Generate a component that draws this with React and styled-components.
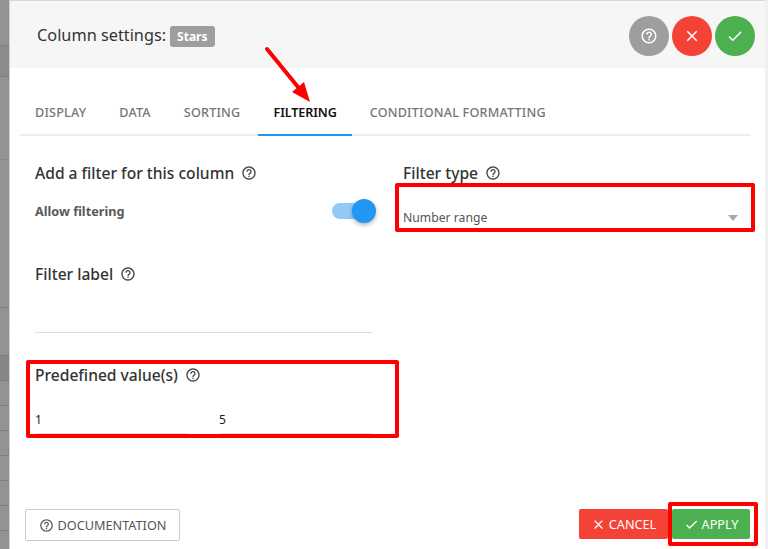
import React from 'react';
import styled, { createGlobalStyle } from 'styled-components';
import { MdHelpOutline, MdClose, MdCheck } from 'react-icons/md';

const GlobalStyle = createGlobalStyle`
  html, body {
    margin: 0;
    padding: 0;
    height: 100%;
    overflow: hidden;
    background: #f0f0f0;
    font-family: "Noto Sans", "Open Sans", sans-serif;
  }
  * {
    box-sizing: border-box;
  }
`;

const Page = styled.div`
  position: relative;
  display: flex;
  width: 768px;
  height: 549px;
  overflow: hidden;
`;

const Backdrop = styled.div`
  width: 10px;
  flex: none;
  display: flex;
  flex-direction: column;
  background: #939393;
  border-right: 1px solid #cfcfcf;
`;

const BackdropRow = styled.div`
  position: relative;
  height: ${(p) => p.$h}px;
  flex: none;
  background: ${(p) => p.$bg || 'transparent'};
  border-bottom: 1px solid ${(p) => p.$line || '#7f7f7f'};

  &::after {
    content: '';
    display: ${(p) => (p.$mark ? 'block' : 'none')};
    position: absolute;
    right: 0;
    top: ${(p) => p.$mark}px;
    width: 1px;
    height: 4px;
    background: #a58a4e;
  }
`;

const Modal = styled.div`
  width: 755px;
  flex: none;
  display: flex;
  flex-direction: column;
  margin-top: 1px;
  background: #fff;
  box-shadow: 0 -1px 0 #d8d8d8;
`;

const Header = styled.div`
  height: 67px;
  flex: none;
  display: flex;
  align-items: center;
  justify-content: space-between;
  padding: 3px 10px 0 27px;
  background: #f6f6f6;
`;

const TitleGroup = styled.div`
  display: flex;
  align-items: center;
  gap: 4px;
`;

const Title = styled.div`
  font-size: 16.3px;
  color: #333;
  line-height: 22px;
  margin-top: -2px;
`;

const Chip = styled.span`
  display: inline-flex;
  align-items: center;
  height: 21px;
  padding: 0 7px;
  margin-top: 1px;
  border-radius: 3px;
  background: #9e9e9e;
  color: #fff;
  font-size: 12px;
  font-weight: 700;
`;

const HeaderActions = styled.div`
  display: flex;
  gap: 3px;
`;

const RoundButton = styled.button`
  width: 40px;
  height: 40px;
  padding: 0;
  border: none;
  border-radius: 50%;
  display: flex;
  align-items: center;
  justify-content: center;
  color: #fff;
  background: ${(p) => p.$bg};
`;

const Tabs = styled.div`
  display: flex;
  gap: 3px;
  height: 46px;
  flex: none;
  margin: 22px 14px 0 10px;
  border-bottom: 2px solid #eee;
`;

const Tab = styled.div`
  height: 46px;
  padding: 0 15px;
  display: flex;
  align-items: center;
  font-size: 12.6px;
  letter-spacing: ${(p) => (p.$active ? '-0.1px' : '0.2px')};
  font-weight: ${(p) => (p.$active ? 600 : 500)};
  white-space: nowrap;
  color: ${(p) => (p.$active ? '#111' : '#757575')};
  border-bottom: 2px solid ${(p) => (p.$active ? '#2196f3' : 'transparent')};
`;

const Content = styled.div`
  flex: 1;
  display: grid;
  grid-template-columns: 337px 337px;
  column-gap: 31px;
  padding: 25px 0 0 25px;
`;

const Column = styled.div`
  display: flex;
  flex-direction: column;
`;

const SectionTitle = styled.div`
  display: flex;
  align-items: center;
  gap: 7px;
  height: 24px;
  font-size: 15.6px;
  font-weight: 500;
  color: #333;
`;

const ToggleRow = styled.div`
  display: flex;
  align-items: center;
  justify-content: space-between;
  height: 24px;
  margin-top: 14px;
`;

const ToggleLabel = styled.div`
  font-size: 12.7px;
  font-weight: 700;
  color: #5a5a5a;
`;

const Toggle = styled.div`
  position: relative;
  width: 40px;
  height: 16px;
  border-radius: 8px;
  background: #90caf9;
`;

const Thumb = styled.div`
  position: absolute;
  right: -4px;
  top: -4px;
  width: 24px;
  height: 24px;
  border-radius: 50%;
  background: #2196f3;
  box-shadow: 0 2px 4px rgba(0, 0, 0, 0.3);
`;

const LabelField = styled.div`
  margin-top: 39px;
`;

const Underline = styled.div`
  height: 24px;
  margin-top: 23px;
  border-bottom: 1px solid #ddd;
`;

const SelectBox = styled.div`
  display: flex;
  align-items: flex-end;
  justify-content: space-between;
  height: 40px;
  margin-top: 7px;
  padding: 0 2px 5px 0;
  font-size: 12.2px;
  color: #555;
  border-bottom: 1px solid #ddd;
`;

const Caret = styled.span`
  width: 0;
  height: 0;
  margin-bottom: 5px;
  border-left: 5px solid transparent;
  border-right: 5px solid transparent;
  border-top: 6px solid #aaa;
`;

const Predefined = styled.div`
  margin-top: 30px;
`;

const RangeRow = styled.div`
  display: grid;
  grid-template-columns: 154px 153px;
  column-gap: 30px;
  margin-top: 22px;
`;

const RangeInput = styled.div`
  height: 25px;
  font-size: 12px;
  line-height: 22px;
  color: #222;
  border-bottom: 1px solid #e4e4e4;
`;

const Footer = styled.div`
  display: flex;
  justify-content: space-between;
  align-items: flex-start;
  height: 40px;
  flex: none;
  padding: 0 15px;
`;

const OutlineButton = styled.button`
  display: flex;
  align-items: center;
  justify-content: center;
  gap: 4px;
  width: 155px;
  height: 32px;
  padding: 0;
  border: 1px solid #ccc;
  border-radius: 2px;
  background: #fff;
  color: #555;
  font-family: inherit;
  font-size: 12.7px;
`;

const FooterActions = styled.div`
  display: flex;
  gap: 4px;
`;

const ActionButton = styled.button`
  display: flex;
  align-items: center;
  justify-content: center;
  gap: 3px;
  width: ${(p) => p.$w}px;
  height: 30px;
  padding: 0;
  border: none;
  border-radius: 2px;
  background: ${(p) => p.$bg};
  color: #fff;
  font-family: inherit;
  font-size: 12.7px;
`;

const RightEdge = styled.div`
  flex: 1;
  background: #f0f0f0;
`;

const Highlight = styled.div`
  position: absolute;
  left: ${(p) => p.$x}px;
  top: ${(p) => p.$y}px;
  width: ${(p) => p.$w}px;
  height: ${(p) => p.$h}px;
  border: 4px solid #f00;
  border-radius: 2px;
  pointer-events: none;
`;

const Arrow = styled.svg`
  position: absolute;
  left: 260px;
  top: 44px;
`;

const rows = [
  { h: 46 }, { h: 31, bg: '#8b8b8b' }, { h: 83, line: '#8a8a8a' }, { h: 148 }, { h: 48, mark: 24 },
  { h: 25, bg: '#868686' }, { h: 25 }, { h: 25 }, { h: 25, mark: 17 }, { h: 25, mark: 8 },
  { h: 25 }, { h: 25, mark: 12 }, { h: 25 }, { h: 18 },
];

const Help = ({ size = 16 }) => <MdHelpOutline size={size} color="#444" />;

export default function App() {
  return (
    <Page>
      <GlobalStyle />
      <Backdrop>
        {rows.map((r, i) => (
          <BackdropRow key={i} $h={r.h} $bg={r.bg} $line={r.line} $mark={r.mark} />
        ))}
      </Backdrop>
      <Modal>
        <Header>
          <TitleGroup>
            <Title>Column settings:</Title>
            <Chip>Stars</Chip>
          </TitleGroup>
          <HeaderActions>
            <RoundButton $bg="#9e9e9e"><MdHelpOutline size={18} /></RoundButton>
            <RoundButton $bg="#f44336"><MdClose size={18} /></RoundButton>
            <RoundButton $bg="#4caf50"><MdCheck size={18} /></RoundButton>
          </HeaderActions>
        </Header>
        <Tabs>
          <Tab>DISPLAY</Tab>
          <Tab>DATA</Tab>
          <Tab>SORTING</Tab>
          <Tab $active>FILTERING</Tab>
          <Tab>CONDITIONAL FORMATTING</Tab>
        </Tabs>
        <Content>
          <Column>
            <SectionTitle>Add a filter for this column <Help /></SectionTitle>
            <ToggleRow>
              <ToggleLabel>Allow filtering</ToggleLabel>
              <Toggle><Thumb /></Toggle>
            </ToggleRow>
            <LabelField>
              <SectionTitle>Filter label <Help /></SectionTitle>
              <Underline />
            </LabelField>
            <Predefined>
              <SectionTitle>Predefined value(s) <Help /></SectionTitle>
              <RangeRow>
                <RangeInput>1</RangeInput>
                <RangeInput>5</RangeInput>
              </RangeRow>
            </Predefined>
          </Column>
          <Column>
            <SectionTitle>Filter type <Help /></SectionTitle>
            <SelectBox>
              <span>Number range</span>
              <Caret />
            </SelectBox>
          </Column>
        </Content>
        <Footer>
          <OutlineButton><MdHelpOutline size={15} /> DOCUMENTATION</OutlineButton>
          <FooterActions>
            <ActionButton $w={89} $bg="#f44336"><MdClose size={15} /> CANCEL</ActionButton>
            <ActionButton $w={78} $bg="#4caf50"><MdCheck size={15} /> APPLY</ActionButton>
          </FooterActions>
        </Footer>
      </Modal>
      <RightEdge />
      <Highlight $x={395} $y={183} $w={360} $h={49} />
      <Highlight $x={26} $y={360} $w={373} $h={78} />
      <Highlight $x={668} $y={502} $w={90} $h={44} />
      <Arrow width="56" height="62" viewBox="0 0 56 62">
        <line x1="7" y1="5" x2="38" y2="43" stroke="#f00" strokeWidth="4" strokeLinecap="round" />
        <polygon points="50,58 32,48 44,38" fill="#f00" />
      </Arrow>
    </Page>
  );
}
